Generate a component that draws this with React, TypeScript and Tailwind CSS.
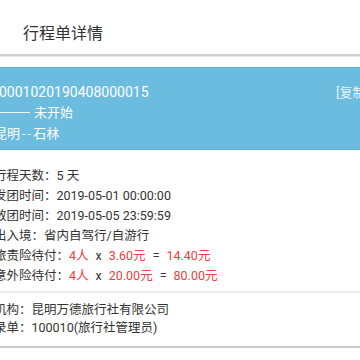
export default function App() {
  const font = { fontFamily: '"Roboto", "Noto Sans CJK SC", sans-serif' };

  return (
    <div className="w-[360px] h-[360px] overflow-hidden bg-white text-[#333]" style={font}>
      {/* Header */}
      <div className="h-[56px] flex items-center pl-[23px] pt-[14px] border-b-2 border-[#cfcfcf]">
        <span className="text-[16px] leading-none text-[#333]">行程单详情</span>
      </div>
      <div className="h-px bg-[#e6e6e6]" />

      {/* Order card */}
      <div className="mt-[10px] h-[83px] bg-[#6cbcdf] border-t border-b border-[#5cb1d8] pt-[14px] text-white">
        <div className="flex items-center h-[20px] -ml-[1px] -mr-[9px]">
          <span className="text-[14px] leading-none">0001020190408000015</span>
          <span className="ml-auto text-[13px] leading-none text-white/80">[复制]</span>
        </div>
        <div className="flex items-center h-[20px] gap-[4px]">
          <div className="w-[30px] h-px bg-white/90" />
          <span className="text-[13px] leading-none">未开始</span>
        </div>
        <div className="flex items-center h-[22px] -ml-[6px] text-[13px] leading-none">
          <span>昆明</span>
          <span className="tracking-[2px] ml-[2px]">--</span>
          <span>石林</span>
        </div>
      </div>

      {/* Trip info */}
      <div className="pt-[16px] pb-[5px] -ml-[6px] text-[12.5px] leading-[20px]">
        <div>行程天数：5 天</div>
        <div>发团时间：2019-05-01 00:00:00</div>
        <div>散团时间：2019-05-05 23:59:59</div>
        <div>出入境：省内自驾行/自游行</div>
        <div>
          旅责险待付：<span className="text-[#ee4040]">4人</span>
          <span className="mx-[7px]">x</span>
          <span className="text-[#ee4040]">3.60元</span>
          <span className="mx-[7px]">=</span>
          <span className="text-[#ee4040]">14.40元</span>
        </div>
        <div>
          意外险待付：<span className="text-[#ee4040]">4人</span>
          <span className="mx-[7px]">x</span>
          <span className="text-[#ee4040]">20.00元</span>
          <span className="mx-[7px]">=</span>
          <span className="text-[#ee4040]">80.00元</span>
        </div>
      </div>
      <div className="h-[2px] bg-[#ececec]" />

      {/* Agency */}
      <div className="pt-[8px] pb-[9px] -ml-[6px] text-[12.5px] leading-[18px]">
        <div>机构：昆明万德旅行社有限公司</div>
        <div>录单：100010(旅行社管理员)</div>
      </div>
      <div className="h-[2px] bg-[#c9c9c9]" />
    </div>
  );
}
